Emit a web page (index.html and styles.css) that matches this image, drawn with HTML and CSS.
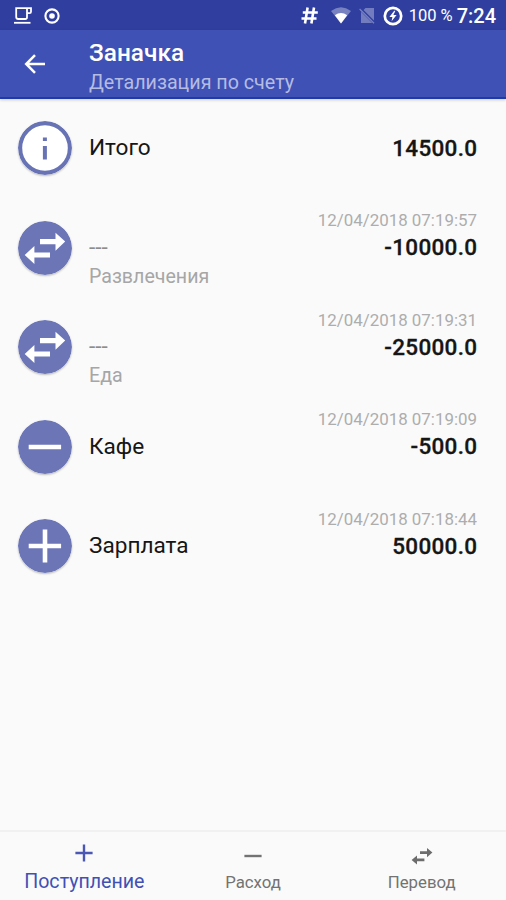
FILE: index.html
```html
<!DOCTYPE html>
<html lang="ru">
<head>
  <meta charset="UTF-8">
  <meta name="viewport" content="width=device-width, initial-scale=1.0">
  <title>Заначка</title>
  <link rel="stylesheet" href="styles.css">
</head>
<body>
  <div class="status-bar">
    <svg class="icon-cup" width="20" height="18" viewBox="0 0 20 18">
      <path d="M3.2 1.2H14v9q0 1.8-1.8 1.8H5.2q-2 0-2-2zM14 1.2h4v3.6q0 1.4-1.4 1.4H14" fill="none" stroke="#fff" stroke-width="1.8"/>
      <path d="M1 15.8h16.5" stroke="#fff" stroke-width="1.8"/>
    </svg>
    <svg class="icon-record" width="16" height="16" viewBox="0 0 16 16">
      <circle cx="8" cy="8" r="6.6" fill="none" stroke="#fff" stroke-width="2.1"/>
      <circle cx="8" cy="8" r="2.8" fill="#fff"/>
    </svg>
    <svg class="icon-hash" width="17" height="17" viewBox="0 0 17 17">
      <path d="M6.6.5L4 16.5M13 .5l-2.6 16M1.8 5.5h15M.5 11.5h15" stroke="#fff" stroke-width="2.6"/>
    </svg>
    <svg class="icon-wifi" width="20" height="17" viewBox="0 0 20 17">
      <path d="M0 4Q10-3.4 20 4L10 16.5z" fill="#fff" opacity=".35"/>
      <path d="M3.8 8.2Q10 4 16.2 8.2L10 16.5z" fill="#fff"/>
    </svg>
    <svg class="icon-sim" width="16" height="17" viewBox="0 0 16 17">
      <path d="M6.5 1H15v12.6L4.6 3zM2 4.8L13.3 16H2z" fill="#fff" opacity=".32"/>
      <path d="M.6 2L15 16.3" stroke="#fff" stroke-width="1.2" opacity=".35"/>
    </svg>
    <svg class="icon-battery" width="20" height="20" viewBox="0 0 20 20">
      <circle cx="10" cy="10" r="8.2" fill="none" stroke="#fff" stroke-width="2.7"/>
      <path d="M11.2 4.8L6.4 10.9h3l-.8 4.3 5-6.1h-3.2l2-4.3z" fill="#fff"/>
    </svg>
    <span class="percent">100 %</span>
    <span class="time">7:24</span>
  </div>

  <header class="toolbar">
    <svg class="back" width="22" height="20" viewBox="0 0 22 20">
      <path d="M21 10H2.5M11 1.2L2.2 10l8.8 8.8" fill="none" stroke="#fff" stroke-width="2.5"/>
    </svg>
    <div class="titles">
      <h1>Заначка</h1>
      <p>Детализация по счету</p>
    </div>
  </header>

  <main class="list">
    <div class="row">
      <svg class="badge" viewBox="0 0 54 54">
        <circle cx="27" cy="27" r="24.9" fill="#fff" stroke="#6873b5" stroke-width="4.2"/>
        <path d="M24.9 16.4h4v3.6h-4zM24.9 25h4v13.4h-4z" fill="#6873b5"/>
      </svg>
      <div class="info">
        <span class="name">Итого</span>
      </div>
      <div class="sum">
        <span class="amount">14500.0</span>
      </div>
    </div>
    <div class="row">
      <svg class="badge" viewBox="0 0 54 54">
        <circle cx="27" cy="27" r="27" fill="#6c76b7"/>
        <path d="M22 18.1h15.5v-6.3l9.7 8.8-9.7 9.1v-6.5H22zM32 36.6H16.4v6.4l-9.7-8.9 9.7-9v6.4H32z" fill="#fff"/>
      </svg>
      <div class="info">
        <span class="name muted">---</span>
        <span class="note">Развлечения</span>
      </div>
      <div class="sum">
        <span class="date">12/04/2018 07:19:57</span>
        <span class="amount">-10000.0</span>
      </div>
    </div>
    <div class="row">
      <svg class="badge" viewBox="0 0 54 54">
        <circle cx="27" cy="27" r="27" fill="#6c76b7"/>
        <path d="M22 18.1h15.5v-6.3l9.7 8.8-9.7 9.1v-6.5H22zM32 36.6H16.4v6.4l-9.7-8.9 9.7-9v6.4H32z" fill="#fff"/>
      </svg>
      <div class="info">
        <span class="name muted">---</span>
        <span class="note">Еда</span>
      </div>
      <div class="sum">
        <span class="date">12/04/2018 07:19:31</span>
        <span class="amount">-25000.0</span>
      </div>
    </div>
    <div class="row">
      <svg class="badge" viewBox="0 0 54 54">
        <circle cx="27" cy="27" r="27" fill="#6c76b7"/>
        <path d="M10.7 27h32.4" stroke="#fff" stroke-width="4.6"/>
      </svg>
      <div class="info">
        <span class="name">Кафе</span>
      </div>
      <div class="sum">
        <span class="date">12/04/2018 07:19:09</span>
        <span class="amount">-500.0</span>
      </div>
    </div>
    <div class="row">
      <svg class="badge" viewBox="0 0 54 54">
        <circle cx="27" cy="27" r="27" fill="#6c76b7"/>
        <path d="M10.7 27h32.4M27 10.6v32.8" stroke="#fff" stroke-width="4.6"/>
      </svg>
      <div class="info">
        <span class="name">Зарплата</span>
      </div>
      <div class="sum">
        <span class="date">12/04/2018 07:18:44</span>
        <span class="amount">50000.0</span>
      </div>
    </div>
  </main>

  <nav class="bottom-nav">
    <a class="tab active">
      <svg width="24" height="24" viewBox="0 0 24 24">
        <path d="M3.4 12h17.2M12 3.4v17.2" stroke="#4a57b5" stroke-width="2.4"/>
      </svg>
      <span>Поступление</span>
    </a>
    <a class="tab">
      <svg width="24" height="24" viewBox="0 0 24 24">
        <path d="M3.4 12h17.2" stroke="#737373" stroke-width="2.4"/>
      </svg>
      <span>Расход</span>
    </a>
    <a class="tab">
      <svg width="24" height="24" viewBox="0 0 24 24">
        <path d="M10 7.3h7V4l5.4 4.6-5.4 4.6V9.9h-7zM14.4 17.2H7v3.4L1.6 16 7 11.4v3.2h7.4z" fill="#6c6c6c"/>
      </svg>
      <span>Перевод</span>
    </a>
  </nav>
</body>
</html>
```

FILE: styles.css
```css
* {
  box-sizing: border-box;
}
body {
  margin: 0;
  height: 900px;
  display: flex;
  flex-direction: column;
  overflow: hidden;
  background: #fafafa;
  color: #161616;
  font-family: Roboto, "Noto Sans", sans-serif;
}
.status-bar {
  height: 30px;
  flex: none;
  display: flex;
  align-items: center;
  padding: 1px 10px 0 13px;
  background: #303f9f;
  color: #fff;
}
.icon-record {
  margin-left: 11px;
}
.icon-hash {
  margin-left: auto;
}
.icon-wifi {
  margin-left: 13px;
}
.icon-sim {
  margin-left: 8px;
}
.icon-battery {
  margin-left: 8px;
}
.percent {
  margin-left: 6px;
  font-size: 16.5px;
  white-space: nowrap;
}
.time {
  margin-left: 4px;
  font-size: 20px;
  font-weight: 500;
}
.toolbar {
  height: 69px;
  flex: none;
  display: flex;
  align-items: center;
  padding-left: 24px;
  background: #3f51b5;
  border-bottom: 2px solid #1f3ca6;
  box-shadow: 0 1px 3px rgba(0, 0, 0, 0.2);
  color: #fff;
}
.titles {
  margin-left: 43px;
  padding-top: 8px;
}
.titles h1 {
  margin: 0;
  font-size: 24.4px;
  line-height: 29px;
  font-weight: 500;
}
.titles p {
  margin: 0;
  font-size: 19.7px;
  line-height: 31px;
  color: #b5bce2;
}
.list {
  flex: 1;
}
.row {
  height: 99.5px;
  display: flex;
  align-items: center;
  padding: 0 29px 1px 18px;
}
.badge {
  width: 54px;
  height: 54px;
  flex: none;
  border-radius: 50%;
  box-shadow: 0 1px 2px rgba(0, 0, 0, 0.25);
}
.info,
.sum {
  height: 86px;
  display: flex;
  flex-direction: column;
  line-height: 28px;
}
.info {
  flex: 1;
  margin-left: 17px;
  padding-top: 29px;
}
.sum {
  align-items: flex-end;
  justify-content: flex-end;
  padding-bottom: 29.5px;
}
.name {
  font-size: 22.6px;
}
.muted {
  color: #8c8c8c;
}
.note {
  font-size: 19.6px;
  line-height: 29px;
  color: #a6a6a6;
}
.date {
  font-size: 16.9px;
  line-height: 27px;
  color: #adadad;
}
.amount {
  font-size: 22.5px;
  line-height: 27px;
  font-weight: 500;
  letter-spacing: 0.3px;
  margin-right: -0.3px;
  -webkit-text-stroke: 0.3px #161616;
}
.bottom-nav {
  height: 70px;
  flex: none;
  display: flex;
  border-top: 2px solid #f1f1f1;
}
.tab {
  flex: 1;
  display: flex;
  flex-direction: column;
  align-items: center;
  padding-top: 12px;
  font-size: 16.8px;
  line-height: 28px;
  color: #737373;
}
.tab.active {
  padding-top: 9px;
  font-size: 19.6px;
  line-height: 34px;
  color: #3f51b5;
}
```
